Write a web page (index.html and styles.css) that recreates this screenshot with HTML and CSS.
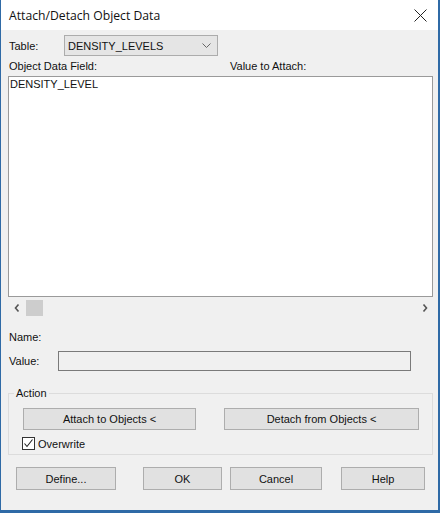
FILE: index.html
```html
<!DOCTYPE html>
<html>
<head>
<meta charset="utf-8">
<link rel="stylesheet" href="styles.css">
</head>
<body>
<div class="window">
  <div class="titlebar">
    <span class="title">Attach/Detach Object Data</span>
    <svg class="close" width="13" height="13" viewBox="0 0 13 13"><path d="M0.5 0.5 L12.5 12.5 M12.5 0.5 L0.5 12.5" stroke="#222" stroke-width="1" fill="none"/></svg>
  </div>
  <div class="content">
    <div class="row-table">
      <span class="lbl-table">Table:</span>
      <div class="combo">
        <span>DENSITY_LEVELS</span>
        <svg width="9" height="5" viewBox="0 0 9 5"><path d="M0.5 0.5 L4.5 4.5 L8.5 0.5" stroke="#666" stroke-width="1" fill="none"/></svg>
      </div>
    </div>
    <div class="row-heads">
      <span class="head-field">Object Data Field:</span>
      <span>Value to Attach:</span>
    </div>
    <div class="listbox">
      <div class="item">DENSITY_LEVEL</div>
    </div>
    <div class="hscroll">
      <svg class="arrow" width="6" height="8" viewBox="0 0 6 8"><path d="M4.5 0.5 L1.5 4 L4.5 7.5" stroke="#555" stroke-width="1.6" fill="none"/></svg>
      <div class="thumb"></div>
      <div class="spacer"></div>
      <svg class="arrow" width="6" height="8" viewBox="0 0 6 8"><path d="M1.5 0.5 L4.5 4 L1.5 7.5" stroke="#555" stroke-width="1.6" fill="none"/></svg>
    </div>
    <div class="row-name">Name:</div>
    <div class="row-value">
      <span class="lbl-value">Value:</span>
      <div class="valuebox"></div>
    </div>
    <div class="group">
      <span class="legend">Action</span>
      <div class="group-buttons">
        <button class="btn btn-attach">Attach to Objects &lt;</button>
        <button class="btn btn-detach">Detach from Objects &lt;</button>
      </div>
      <label class="check-row">
        <span class="checkbox"><svg width="11" height="11" viewBox="0 0 11 11"><path d="M1.5 5.5 L4 8.5 L9.5 1.5" stroke="#222" stroke-width="1.1" fill="none"/></svg></span>
        <span>Overwrite</span>
      </label>
    </div>
    <div class="bottom-buttons">
      <button class="btn btn-define">Define...</button>
      <button class="btn btn-ok">OK</button>
      <button class="btn btn-cancel">Cancel</button>
      <button class="btn btn-help">Help</button>
    </div>
  </div>
</div>
</body>
</html>
```

FILE: styles.css
```css
html, body {
  margin: 0;
  padding: 0;
  background: #f0f0f0;
}
body {
  font-family: "Liberation Sans", Arial, sans-serif;
  font-size: 11px;
  color: #111;
}
.window {
  width: 440px;
  height: 513px;
  box-sizing: border-box;
  border-style: solid;
  border-color: #2f6aa6;
  border-width: 0 2px 3px 1px;
  background: #f0f0f0;
  display: flex;
  flex-direction: column;
}
.titlebar {
  height: 30px;
  flex: none;
  background: #fff;
  display: flex;
  align-items: center;
  justify-content: space-between;
  padding: 0 11px 0 8px;
}
.title {
  font-family: "Open Sans", "Noto Sans", sans-serif;
  font-size: 12.2px;
  color: #111;
  padding-top: 1px;
}
.close {
  display: block;
  margin-top: 1px;
}
.content {
  padding: 0 5px 0 7px;
}
.row-table {
  margin-top: 5px;
  height: 21px;
  display: flex;
  align-items: center;
}
.lbl-table {
  width: 55px;
  padding-left: 1px;
}
.combo {
  width: 154px;
  height: 21px;
  box-sizing: border-box;
  border: 1px solid #acacac;
  background: #e5e5e5;
  display: flex;
  align-items: center;
  justify-content: space-between;
  padding: 0 6px 0 3px;
}
.row-heads {
  margin-top: 4px;
  height: 13px;
  line-height: 13px;
  display: flex;
}
.head-field {
  width: 221px;
  padding-left: 1px;
}
.listbox {
  margin-top: 3px;
  height: 221px;
  box-sizing: border-box;
  border: 1px solid #9a9a9a;
  background: #fff;
}
.item {
  padding: 1px 0 0 1px;
  line-height: 13px;
}
.hscroll {
  height: 22px;
  display: flex;
  align-items: center;
}
.arrow {
  display: block;
  flex: none;
}
.hscroll .arrow:first-child {
  margin-left: 6px;
}
.hscroll .arrow:last-child {
  margin-right: 5px;
}
.thumb {
  width: 17px;
  height: 16px;
  background: #cdcdcd;
  margin-left: 6px;
}
.spacer {
  flex: 1;
}
.row-name {
  margin-top: 12px;
  height: 13px;
  line-height: 13px;
  padding-left: 1px;
}
.row-value {
  margin-top: 7px;
  height: 20px;
  display: flex;
  align-items: center;
}
.lbl-value {
  width: 49px;
  padding-left: 1px;
}
.valuebox {
  width: 353px;
  height: 20px;
  box-sizing: border-box;
  border: 1px solid #7a7a7a;
  background: #f0f0f0;
}
.group {
  position: relative;
  margin-top: 22px;
  height: 62px;
  box-sizing: border-box;
  border: 1px solid #dcdcdc;
  padding: 14px 0 0 14px;
}
.legend {
  position: absolute;
  left: 5px;
  top: -7px;
  padding: 0 2px;
  line-height: 13px;
  background: #f0f0f0;
}
.group-buttons {
  display: flex;
  gap: 28px;
}
.btn {
  font-family: "Liberation Sans", Arial, sans-serif;
  font-size: 11px;
  color: #111;
  background: #e1e1e1;
  border: 1px solid #adadad;
  border-radius: 0;
  padding: 0;
  margin: 0;
  box-sizing: border-box;
}
.btn-attach {
  width: 173px;
  height: 22px;
}
.btn-detach {
  width: 195px;
  height: 22px;
}
.check-row {
  margin-top: 7px;
  margin-left: -1px;
  display: flex;
  align-items: center;
  gap: 3px;
  height: 13px;
}
.checkbox {
  width: 13px;
  height: 13px;
  box-sizing: border-box;
  border: 1px solid #333;
  background: #fff;
  display: flex;
  align-items: center;
  justify-content: center;
}
.checkbox svg {
  display: block;
}
.bottom-buttons {
  margin-top: 12px;
  padding-left: 8px;
  display: flex;
}
.bottom-buttons .btn {
  height: 23px;
}
.btn-define {
  width: 100px;
}
.btn-ok {
  width: 79px;
  margin-left: 27px;
}
.btn-cancel {
  width: 92px;
  margin-left: 8px;
}
.btn-help {
  width: 84px;
  margin-left: 19px;
}
```
